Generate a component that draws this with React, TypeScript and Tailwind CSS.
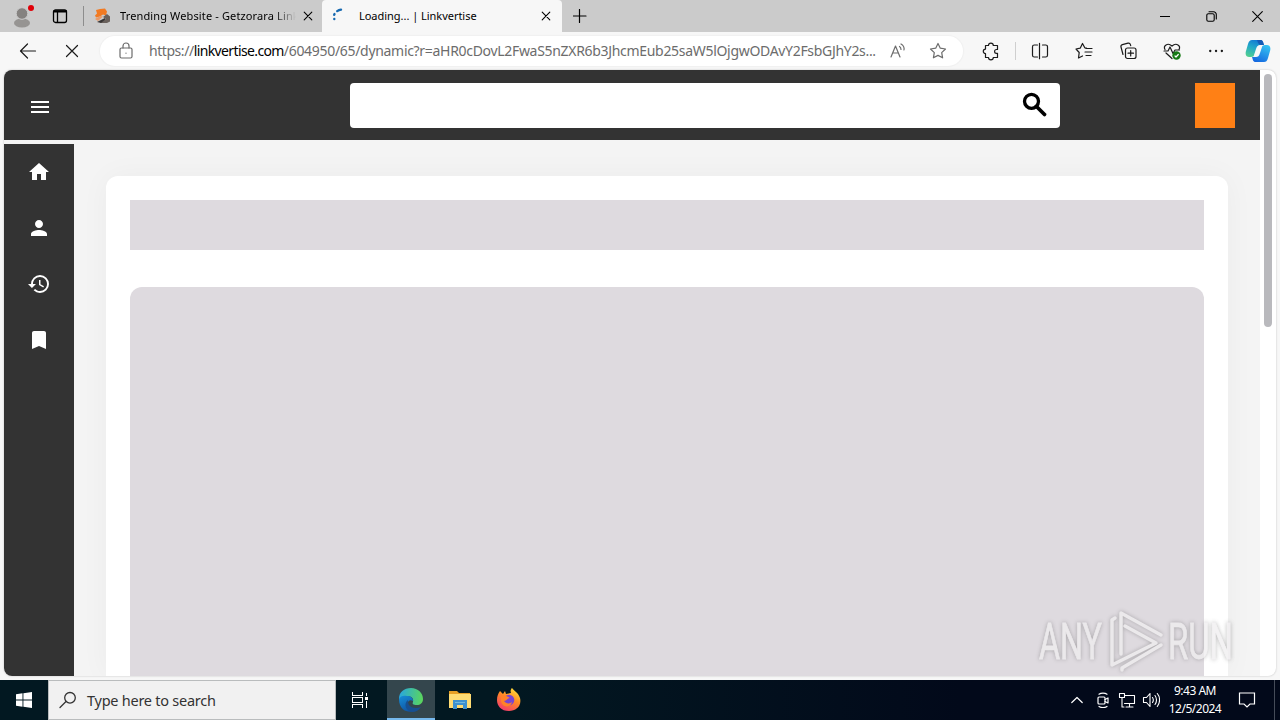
import type { ReactNode } from 'react';

interface IconProps {
  children: ReactNode;
  size?: number;
  className?: string;
  stroke?: number;
}

// Thin outline icon, drawn on a grid as large as the icon itself
function Line({ children, size = 20, className = '', stroke = 1.2 }: IconProps) {
  return (
    <svg
      width={size}
      height={size}
      viewBox={`0 0 ${size} ${size}`}
      fill="none"
      stroke="currentColor"
      strokeWidth={stroke}
      strokeLinecap="round"
      strokeLinejoin="round"
      className={`shrink-0 ${className}`}
    >
      {children}
    </svg>
  );
}

// Filled 24px icon for the site's navigation
function Glyph({ d }: { d: string }) {
  return (
    <svg width="24" height="24" viewBox="0 0 24 24" fill="currentColor" className="shrink-0">
      <path d={d} />
    </svg>
  );
}

function CloseIcon() {
  return (
    <Line size={10} stroke={1.1}>
      <path d="M1.2 1.2 8.8 8.8M8.8 1.2 1.2 8.8" />
    </Line>
  );
}

function TabBar() {
  return (
    <div className="flex h-8 shrink-0 bg-[#cbcbcb] text-black">
      <div className="flex w-11 items-center justify-center">
        <svg width="24" height="26" viewBox="0 0 24 26">
          <ellipse cx="12" cy="20" rx="8" ry="4.5" fill="#969492" />
          <circle cx="12" cy="10.5" r="5.8" fill="#858280" stroke="#cbcbcb" />
          <circle cx="21" cy="5" r="3" fill="#e00008" />
        </svg>
      </div>
      <div className="flex w-8 items-center justify-center">
        <Line size={16} stroke={1.3}>
          <rect x="1.5" y="2" width="13" height="12.5" rx="2" />
          <path d="M2 3.3h12" strokeWidth="2.2" />
          <path d="M5.5 4v10" />
        </Line>
      </div>
      <div className="my-1.5 ml-[7px] w-px bg-[#8d8d8d]" />
      <div className="flex w-[238px] items-center pl-2.5">
        <svg width="17" height="16" viewBox="0 0 17 16">
          <path d="m2 2 4-1 5-.5 2 3-1 4-3-1-3 2-4 1-1-2 2-2z" fill="#f27a22" />
          <path d="m1 11 5-3 3 .5L4 13z" fill="#e99a68" />
          <path d="m9 9 4-3 3 2.5v5L13 15H6l3-2 3-2z" fill="#6a615c" />
          <path d="m3 14 5-2.5 3-1.5.5 1.5L7 15z" fill="#393535" />
        </svg>
        <span className="ml-[9px] w-[176px] overflow-hidden whitespace-nowrap bg-linear-to-r from-black from-88% to-transparent bg-clip-text text-[11px] leading-4 tracking-[0.13px] text-transparent">
          Trending Website - Getzorara Link
        </span>
        <span className="ml-[7px]">
          <CloseIcon />
        </span>
      </div>
      <div className="flex w-[240px] items-center rounded-t-[4px] bg-[#f7f7f7] pl-2.5">
        <Line size={16} stroke={2.4} className="text-[#1769b0]">
          <path d="M5.2 3.1A8 8 0 0 1 9 1.6M2.2 6.8l.3-.7M2.3 11v.1" />
        </Line>
        <span className="ml-[11px] w-[182px] whitespace-nowrap text-[11px] leading-4 tracking-[-0.03px]">
          Loading... | Linkvertise
        </span>
        <CloseIcon />
      </div>
      <div className="flex w-[35px] items-center justify-center">
        <Line size={14} stroke={1.2}>
          <path d="M6.5.5v13M.5 7H13" />
        </Line>
      </div>
      <div className="ml-auto flex">
        <div className="flex w-[46px] items-center justify-center">
          <Line size={10} stroke={1}>
            <path d="M0 5.5h10" />
          </Line>
        </div>
        <div className="flex w-[46px] items-center justify-center">
          <Line size={11} stroke={1.1}>
            <rect x=".8" y="2.8" width="7.4" height="7.4" rx="1.5" />
            <path d="M3 .7h4.5a2.8 2.8 0 0 1 2.8 2.8V8" />
          </Line>
        </div>
        <div className="flex w-[46px] items-center justify-center">
          <Line size={11} stroke={1.1}>
            <path d="m.7.7 9.6 9.6M10.3.7.7 10.3" />
          </Line>
        </div>
      </div>
    </div>
  );
}

function CopilotLogo() {
  return (
    <svg width="26" height="24" viewBox="0 0 26 24">
      <defs>
        <linearGradient id="cpA" x1="0.6" y1="0" x2="0.2" y2="1">
          <stop offset="0" stopColor="#1278d4" />
          <stop offset=".45" stopColor="#23a9c8" />
          <stop offset="1" stopColor="#52cf8f" />
        </linearGradient>
        <linearGradient id="cpB" x1="0.8" y1="0" x2="0.3" y2="1">
          <stop offset="0" stopColor="#35c4f2" />
          <stop offset="1" stopColor="#1569e0" />
        </linearGradient>
      </defs>
      <path d="M7 1h8c3 0 3 2 4 5h-4c-2 0-3 1-4 4l-2 6c0 1-1 2-3 2H4c-3 0-4-3-3-6L3 5c1-3 2-4 4-4z" fill="url(#cpA)" />
      <path d="M19 23h-8c-3 0-3-2-4-5h4c2 0 3-1 4-4l2-6c0-1 1-2 3-2h2c3 0 4 3 3 6l-2 7c-1 3-2 4-4 4z" fill="url(#cpB)" />
      <path d="M12 1h3c3 0 3 2 4 5h-3c-2 0-3-2-4-5z" fill="#155bb5" />
    </svg>
  );
}

function Toolbar() {
  return (
    <div className="flex h-[38px] shrink-0 items-center bg-[#f7f7f7] text-[#1b1b1b]">
      <div className="flex w-14 justify-center">
        <Line size={18}>
          <path d="M1.5 9h15M8.5 2 1.5 9l7 7" />
        </Line>
      </div>
      <div className="flex w-8 justify-center">
        <Line size={14}>
          <path d="m1.5 1.5 11 11M12.5 1.5l-11 11" />
        </Line>
      </div>
      <div className="ml-3 flex h-[30px] w-[863px] items-center rounded-full bg-white pl-4 text-[#6c6c6c] shadow-[0_0_1px_1px_#f0f0f0]">
        <Line>
          <rect x="4" y="7" width="12" height="10" rx="1.5" />
          <path d="M7 7V5a3 3 0 0 1 6 0v2M10 12v.2" />
        </Line>
        <span className="ml-[13px] w-[730px] whitespace-nowrap text-[14px] leading-5 tracking-[-0.31px]">
          <span className="tracking-[-0.45px]">https://</span>
          <span className="tracking-[-0.62px] text-black">linkvertise.com</span>
          /604950/65/dynamic?r=aHR0cDovL2FwaS5nZXR6b3JhcmEub25saW5lOjgwODAvY2FsbGJhY2s...
        </span>
        <Line className="ml-[9px]">
          <path d="m3 16 4.5-11L12 16M4.5 12h6M11.5 5.5c1 .7 1.5 1.7 1.5 3M13 3c2.5 1.5 3.5 3.5 3 6" />
        </Line>
        <Line className="ml-5">
          <path d="m10 2.5 2.3 4.7 5.2.8-3.8 3.6.9 5.2-4.6-2.4-4.6 2.4.9-5.2L2.5 8l5.2-.8z" />
        </Line>
      </div>
      <div className="ml-[18px] flex w-[35px]">
        <Line>
          <path d="M4.5 4.5h3a2.4 2.4 0 0 1 4.8 0h4.2v4h-1a1.9 1.9 0 0 0 0 3.8h1v4.2h-4.2a2.4 2.4 0 0 1-4.8 0h-3v-4a2.2 2.2 0 0 1 0-4.4z" />
        </Line>
      </div>
      <div className="-ml-px h-[18px] w-px bg-[#cfcfcf]" />
      <div className="ml-[14px] flex gap-6">
        <Line>
          <path d="M7.5 4H4.3A1.8 1.8 0 0 0 2.5 5.8v8.4A1.8 1.8 0 0 0 4.3 16h3.2M12.5 4h3.2a1.8 1.8 0 0 1 1.8 1.8v8.4a1.8 1.8 0 0 1-1.8 1.8h-3.2M9.5 2.3v15.4" />
        </Line>
        <Line>
          <path d="m12.5 7-1.7-.2L8.5 2.5 6.2 7.2 2 8l3.2 3.5-.7 5.5L8.5 15M12 7.5h6M11 11h7M12 14.5h5" />
        </Line>
        <Line>
          <rect x="7.5" y="7" width="10.5" height="10.5" rx="2" />
          <path d="M12.7 9.5v5.5M10 12.2h5.5M5 13.5 3 6a2 2 0 0 1 1.4-2.4L10 2.2a2 2 0 0 1 2.4 1.4l.3 1" />
        </Line>
        <Line>
          <path d="M3 8.5C1 5 5.5 1 10 5c4.5-4 9 0 7 3.5M2 10h4l2-4 3 6.5L13 9h4.5M4 12l6 5.5" />
          <circle cx="14.5" cy="14.5" r="4.2" fill="#177a15" stroke="none" />
          <path d="m13 15 1 1 2.3-2.5" stroke="#fff" />
        </Line>
        <Line>
          <path d="M4.2 10h.1M10 10h.1M15.8 10h.1" strokeWidth="2.3" />
        </Line>
      </div>
      <div className="ml-[19px]">
        <CopilotLogo />
      </div>
    </div>
  );
}

const navItems = [
  { id: 'home', d: 'M10 20v-6h4v6h5v-8h3L12 3 2 12h3v8z' },
  { id: 'profile', d: 'M12 12c2.21 0 4-1.79 4-4s-1.79-4-4-4-4 1.79-4 4 1.79 4 4 4zm0 2c-2.67 0-8 1.34-8 4v2h16v-2c0-2.66-5.33-4-8-4z' },
  { id: 'history', d: 'M13 3a9 9 0 0 0-9 9H1l3.89 3.89.07.14L9 12H6c0-3.87 3.13-7 7-7s7 3.13 7 7-3.13 7-7 7c-1.93 0-3.68-.79-4.94-2.06l-1.42 1.42A8.954 8.954 0 0 0 13 21a9 9 0 0 0 0-18zm-1 5v5l4.28 2.54.72-1.21-3.5-2.08V8H12z' },
  { id: 'saved', d: 'M17 3H7c-1.1 0-2 .9-2 2v16l7-3 7 3V5c0-1.1-.9-2-2-2z' },
];

function SiteHeader() {
  return (
    <header className="flex h-[70px] shrink-0 items-center bg-[#333] text-white">
      <div className="ml-6 mt-1">
        <Glyph d="M3 18h18v-2H3v2zm0-5h18v-2H3v2zm0-7v2h18V6H3z" />
      </div>
      <div className="ml-[298px] flex h-[45px] w-[710px] items-center justify-end rounded bg-white pr-3 text-black">
        <svg width="26" height="26" viewBox="0 0 26 26" fill="none" stroke="currentColor">
          <circle cx="9.5" cy="9.3" r="7" strokeWidth="3.3" />
          <path d="m14.5 14.5 8 8" strokeWidth="3.8" strokeLinecap="round" />
        </svg>
      </div>
      <div className="ml-[135px] h-[45px] w-10 bg-[#ff8015]" />
    </header>
  );
}

function Page() {
  return (
    <div className="mx-1 flex h-[606px] shrink-0 overflow-hidden rounded-lg bg-white shadow-[0_0_2px_#bbb]">
      <div className="flex w-[1256px] flex-col bg-[#f4f4f4]">
        <SiteHeader />
        <div className="flex min-h-0 flex-1">
          <nav className="mt-1 flex w-[70px] flex-col items-center gap-8 bg-[#333] pt-4 text-white">
            {navItems.map((item) => (
              <Glyph key={item.id} d={item.d} />
            ))}
          </nav>
          <main className="mx-8 mt-9 flex flex-1 flex-col rounded-t-xl bg-white px-6 pt-6 shadow-[0_0_30px_rgba(0,0,0,0.04)]">
            <div className="h-[50px] shrink-0 bg-[#dedadf]" />
            <div className="mt-[37px] flex-1 rounded-t-xl bg-[#dedadf]" />
          </main>
        </div>
      </div>
      <div className="flex w-4 justify-center pt-1">
        <div className="h-[253px] w-2 rounded-full bg-[#b9b9bd]" />
      </div>
    </div>
  );
}

function Watermark() {
  return (
    <svg
      width="210"
      height="70"
      viewBox="0 0 210 70"
      className="absolute left-[1034px] top-[606px] overflow-visible opacity-75 drop-shadow-[0_0_2px_rgba(90,90,90,0.55)]"
      fontFamily="Roboto, sans-serif"
      fontSize="50"
      fill="#f0eef0"
      stroke="#f0eef0"
      strokeWidth="0.8"
    >
      <text x="5" y="53" textLength="63" lengthAdjust="spacingAndGlyphs">
        ANY
      </text>
      <text x="134" y="53" textLength="65" lengthAdjust="spacingAndGlyphs">
        RUN
      </text>
      <g fill="none" strokeWidth="3.5" strokeLinecap="round" strokeLinejoin="round">
        <path d="M87 48V7l40 22M81 12l-3 2v45l44-22-31-17M127 39 88 62v2" />
      </g>
    </svg>
  );
}

function EdgeLogo() {
  return (
    <svg width="26" height="26" viewBox="0 0 26 26">
      <defs>
        <linearGradient id="edgeTop" x1="0" y1=".4" x2="1" y2=".5">
          <stop offset="0" stopColor="#28a7df" />
          <stop offset="1" stopColor="#5bd65c" />
        </linearGradient>
        <linearGradient id="edgeLow" x1="0" y1="0" x2=".6" y2="1">
          <stop offset="0" stopColor="#168ed8" />
          <stop offset="1" stopColor="#0f4f9e" />
        </linearGradient>
      </defs>
      <path d="M1 12C1 5 6 1 13 1c7 0 12 5 12 11 0 4-3 6-6 6-4 0-5-1-4-3 1-4-2-6-6-6-4 0-7 2-8 4z" fill="url(#edgeTop)" />
      <path d="M1 12c1-3 5-4 8-3 4 0 6 2 6 5-3-2-6 0-5 4 1 5 7 6 12 3-6 6-21 6-21-9z" fill="url(#edgeLow)" />
      <path d="M10 13c-5 4-2 11 4 12 4 0 7-2 9-5-5 2-10 1-12-2-1-2-1-3-1-5z" fill="#174f91" />
    </svg>
  );
}

function FirefoxLogo() {
  return (
    <svg width="26" height="26" viewBox="0 0 26 26">
      <defs>
        <linearGradient id="fox" x1=".8" y1="0" x2=".25" y2="1">
          <stop offset="0" stopColor="#ffe43d" />
          <stop offset=".45" stopColor="#ff8a25" />
          <stop offset="1" stopColor="#f3386f" />
        </linearGradient>
      </defs>
      <path d="M4 4l3 3 2-3 1 3 5-1c-1-2 0-4 1-5 2 3 6 4 8 10 2 8-4 13-11 13C5 24 1 19 1 13c0-4 1-6 3-9z" fill="url(#fox)" />
      <circle cx="13" cy="13" r="5.3" fill="#7845d2" />
      <path d="M5 9c3-2 6 0 9 2-3 0-3 3-6 3 2 3 6 3 8 1-1 6-10 6-11-1z" fill="#ff8228" />
    </svg>
  );
}

function Taskbar() {
  return (
    <div className="flex h-10 shrink-0 items-center bg-linear-to-r from-[#021821] from-40% to-[#02091a] to-75% text-white">
      <div className="flex w-12 justify-center">
        <svg width="16" height="16" viewBox="0 0 16 16" fill="#fff">
          <path d="M0 2.2 6.5 1.3v6.2H0zM7.4 1.2 16 0v7.5H7.4zM0 8.4h6.5v6.3L0 13.8zM7.4 8.4H16V16l-8.6-1.2z" />
        </svg>
      </div>
      <div className="flex h-full w-[288px] items-center border border-[#b9bcbd] bg-[#f1f1f1] text-[#333]">
        <Line size={18} className="ml-2.5" stroke={1.3}>
          <circle cx="11" cy="6.8" r="5.3" />
          <path d="m7 10.5-6 6" />
        </Line>
        <span className="ml-2.5 mt-px whitespace-nowrap text-[14.5px] tracking-[-0.25px]">Type here to search</span>
      </div>
      <div className="flex w-[51px] justify-center pr-1">
        <svg width="18" height="16" viewBox="0 0 18 16" fill="none" stroke="#fff" shapeRendering="crispEdges">
          <path d="M1.5 0v3.5h10V0M1.5 5.5h10v5h-10zM1.5 16v-3.5h10V16M15.5 1v3M15.5 9v7" />
          <path d="M14 6h3" strokeWidth="3" />
        </svg>
      </div>
      <div className="flex h-full w-12 items-center justify-center border-b-2 border-[#76b9ed] bg-[#34464d] pt-0.5">
        <EdgeLogo />
      </div>
      <div className="flex w-[49px] justify-center">
        <svg width="24" height="22" viewBox="0 0 24 22">
          <path d="M1 2h8l2 2h11v3H1z" fill="#e7a025" />
          <path d="M1 5h22v14H1z" fill="#ffdc73" />
          <path d="M5 20v-9h14v9h-4v-4H9v4z" fill="#3d91cf" />
          <path d="M7 13h10v1H7z" fill="#70b8df" />
        </svg>
      </div>
      <div className="flex w-[50px] justify-center">
        <FirefoxLogo />
      </div>
      <div className="ml-auto flex h-full items-center">
        <Line size={12}>
          <path d="m.8 8.5 5.2-5 5.2 5" />
        </Line>
        <Line size={16} className="ml-3">
          <rect x="3" y="5" width="7" height="7" rx="1" />
          <path d="m10 7.5 3-1.5v5l-3-1.5M4 2.2c2-1.5 6-1.5 8 0M4 14.5c2 1.5 6 1.5 8 0" />
        </Line>
        <Line size={18} className="ml-[7px]" stroke={1.1}>
          <path d="M6.5 4.5h10v8h-10M11.5 12.5V16M8 16h7M1.5 2.5h5v4h-5zM4 6.5V16h2" />
        </Line>
        <Line size={18} className="ml-1.5" stroke={1.1}>
          <path d="M1.5 6.5h3l3.5-4v13l-3.5-4h-3zM10.5 6.5c1 1.5 1 3.5 0 5M13 4.5c2 2.5 2 6.5 0 9M15.3 2.5c3 3.5 3 9.5 0 13" />
        </Line>
        <div className="ml-[5px] w-[60px] whitespace-nowrap text-center text-[12px] leading-[18px] tracking-[-0.5px]">
          <div>9:43 AM</div>
          <div>12/5/2024</div>
        </div>
        <Line size={18} className="ml-[13px]">
          <path d="M1.5 2h15v11H12l-3 3-3-3H1.5z" strokeLinejoin="miter" />
        </Line>
        <div className="ml-[18px] mr-[5px] h-full w-px bg-[#454c59]" />
      </div>
    </div>
  );
}

export default function App() {
  return (
    <div className="relative flex h-[720px] w-[1280px] flex-col overflow-hidden bg-[#f7f7f7] font-['Noto_Sans',sans-serif]">
      <TabBar />
      <Toolbar />
      <Page />
      <div className="h-1 shrink-0" />
      <Taskbar />
      <Watermark />
    </div>
  );
}
